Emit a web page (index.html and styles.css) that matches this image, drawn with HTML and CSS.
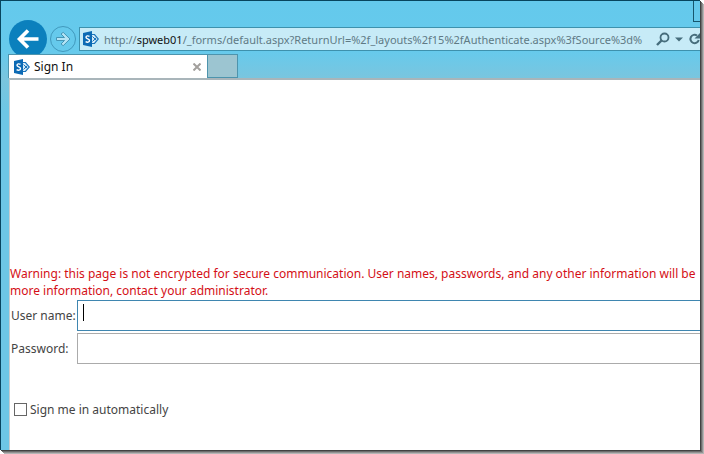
FILE: index.html
```html
<!DOCTYPE html>
<html lang="en">
<head>
<meta charset="utf-8">
<title>Sign In</title>
<link rel="stylesheet" href="styles.css">
</head>
<body>
<svg class="defs" aria-hidden="true">
  <symbol id="sharepoint" viewBox="0 0 16 16">
    <path d="M9 3.500h2.500L15.300 8l-3.800 4.500H9" fill="#d9edf8" stroke="#1a74bb" stroke-width="1.200"/>
    <path d="M9.500 5.500L12 8l-2.500 2.500" fill="none" stroke="#1a74bb"/>
    <circle cx="12" cy="8" r="1.200" fill="#1a74bb"/>
    <path d="M0 2L9 0v16L0 14z" fill="#0c6ab4"/>
    <path d="M6.500 5.300C5 4.500 3 4.700 3 6.200c0 1.800 3.500 1.500 3.500 3.400 0 1.700-2.200 2-3.900 1.100" fill="none" stroke="#fff" stroke-width="1.400"/>
  </symbol>
</svg>
<div class="window">
  <div class="caption"><button class="minimize" aria-label="Minimize"></button></div>
  <header class="toolbar">
    <button class="back" aria-label="Back">
      <svg viewBox="0 0 38 38"><path d="M29.500 19H11M19 10.500L10.500 19l8.500 8.500" fill="none" stroke="#fff" stroke-width="3.600"/></svg>
    </button>
    <button class="forward" aria-label="Forward">
      <svg viewBox="0 0 24 24"><path d="M5.500 10.500h8L10 7l2.200-1.700L19 12l-6.800 6.700L10 17l3.500-3.500h-8z" fill="#b4e4f5" stroke="#4596b6"/></svg>
    </button>
    <div class="address">
      <svg class="logo"><use href="#sharepoint"/></svg>
      <div class="url" role="textbox" aria-label="Address">http://<b>spweb01</b>/_forms/default.aspx?ReturnUrl=%2f_layouts%2f15%2fAuthenticate.aspx%3fSource%3d%</div>
      <button class="tool" aria-label="Search"><svg viewBox="0 0 14 14"><circle cx="8.500" cy="5.500" r="4" fill="none" stroke="#466d7c" stroke-width="1.800"/><path d="M5.500 8.500L1 13" stroke="#466d7c" stroke-width="2.400"/></svg></button>
      <button class="tool" aria-label="Show addresses"><svg viewBox="0 0 14 14"><path d="M3 5.500h8L7 9.500z" fill="#466d7c"/></svg></button>
      <button class="tool" aria-label="Refresh"><svg viewBox="0 0 14 14"><path d="M9 3.500A4.200 4.200 0 1 0 10.700 8" fill="none" stroke="#466d7c" stroke-width="2"/><path d="M12 1v5.500H6.500z" fill="#466d7c"/></svg></button>
    </div>
  </header>
  <nav class="tabs">
    <div class="tab">
      <svg class="logo"><use href="#sharepoint"/></svg>
      <span class="title">Sign In</span>
      <button class="close" aria-label="Close tab"><svg viewBox="0 0 8 8"><path d="M.5.5l7 7M7.500.5l-7 7" stroke="#a3a09d" stroke-width="2"/></svg></button>
    </div>
    <button class="new-tab" aria-label="New tab"></button>
  </nav>
  <main class="page">
    <p class="warning">Warning: this page is not encrypted for secure communication. User names, passwords, and any other information will be<br>more information, contact your administrator.</p>
    <form class="form">
      <label for="user">User name:</label>
      <div class="field"><input class="text active" id="user" type="text"><span class="caret"></span></div>
      <label for="password">Password:</label>
      <div class="field"><input class="text" id="password" type="password"></div>
      <div class="remember"><input id="remember" type="checkbox"><label for="remember">Sign me in automatically</label></div>
    </form>
  </main>
</div>
</body>
</html>
```
FILE: styles.css
```css
* {
  box-sizing: border-box;
}

body {
  margin: 0;
  padding: 0 4px 4px 0;
  height: 100vh;
  background: #fff;
  color: #444;
  font: 12px/17px "Noto Sans", "Open Sans", sans-serif;
  overflow: hidden;
}

button {
  margin: 0;
  padding: 0;
  border: 0;
  background: none;
}

svg {
  display: block;
}

.defs {
  position: absolute;
  width: 0;
  height: 0;
}

.window {
  display: flex;
  flex-direction: column;
  height: 100%;
  border-top: 1px solid #07455e;
  border-left: 1px solid #07455e;
  background: linear-gradient(#64c9ec 0, #66caec 50px, #7ac5de 78px, #6dc7e5 110px, #6dc7e5 100%);
  box-shadow: 1px 1px 0 #424242, 2px 2px 0 #6c6c6c, 3px 3px 0 #919191, 4px 4px 0 #b5b5b5;
  overflow: hidden;
}

.caption {
  display: flex;
  justify-content: flex-end;
  height: 26px;
}

.minimize {
  width: 7px;
  height: 21px;
  border: 1px solid #17566d;
  border-width: 0 0 1px 1px;
}

.toolbar {
  display: flex;
  align-items: center;
  height: 24px;
  padding-left: 8px;
}

.back {
  flex: none;
  width: 38px;
  height: 38px;
  border-radius: 50%;
  background: #0b80bd;
}

.forward {
  flex: none;
  width: 26px;
  height: 26px;
  margin: 0 3px;
  border: 1px solid #4199bd;
  border-radius: 50%;
}

.address {
  display: flex;
  flex: 1;
  align-items: center;
  min-width: 0;
  height: 24px;
  padding-left: 3px;
  border: 1px solid #3d91ad;
  border-right: 0;
  background: #c7ebf7;
  overflow: hidden;
}

.logo {
  flex: none;
  width: 16px;
  height: 16px;
}

.url {
  flex: 1;
  min-width: 0;
  margin: 0 3px 0 5px;
  color: #5f7a85;
  font-size: 11px;
  white-space: nowrap;
  overflow: hidden;
}

.url b {
  color: #111;
  font-weight: 400;
}

.tool {
  flex: none;
  width: 14px;
  height: 14px;
  margin-left: 2px;
}

.tool:last-child {
  margin-right: -2px;
}

.tabs {
  position: relative;
  display: flex;
  height: 27px;
  padding: 3px 0 0 7px;
}

.tab {
  display: flex;
  align-items: center;
  width: 200px;
  padding: 0 6px 0 5px;
  border: 1px solid #4d94ad;
  border-bottom: 0;
  background: #fff;
  color: #111;
}

.title {
  flex: 1;
  margin-left: 4px;
}

.close {
  width: 8px;
  height: 8px;
}

.new-tab {
  width: 30px;
  border: 1px solid #4d94ad;
  border-left: 0;
  background: #9cc5d1;
}

.page {
  flex: 1;
  margin-left: 8px;
  padding-top: 185px;
  border-top: 2px solid #a9b5ba;
  border-left: 1px solid #c5cdd0;
  background: #fff;
}

.warning {
  margin: 0;
  color: #d40f16;
  white-space: nowrap;
}

.form {
  display: grid;
  grid-template-columns: 66px 1fr;
  row-gap: 2px;
  align-items: center;
  padding: 1px 0 0 1px;
  margin-right: -2px;
}

.field {
  position: relative;
}

.text {
  display: block;
  width: 100%;
  height: 31px;
  padding: 4px 5px;
  border: 1px solid #ababab;
  outline: 0;
  background: #fff;
  color: inherit;
  font: inherit;
}

.text.active {
  border-color: #3f86b0;
}

.caret {
  position: absolute;
  top: 4px;
  left: 6px;
  width: 1px;
  height: 17px;
  background: #000;
}

.remember {
  display: flex;
  grid-column: 1 / -1;
  align-items: center;
  padding: 35px 0 0 3px;
}

.remember input {
  appearance: none;
  width: 13px;
  height: 13px;
  margin: 0 3px 0 0;
  border: 1px solid #666;
  background: #fff;
}
```
